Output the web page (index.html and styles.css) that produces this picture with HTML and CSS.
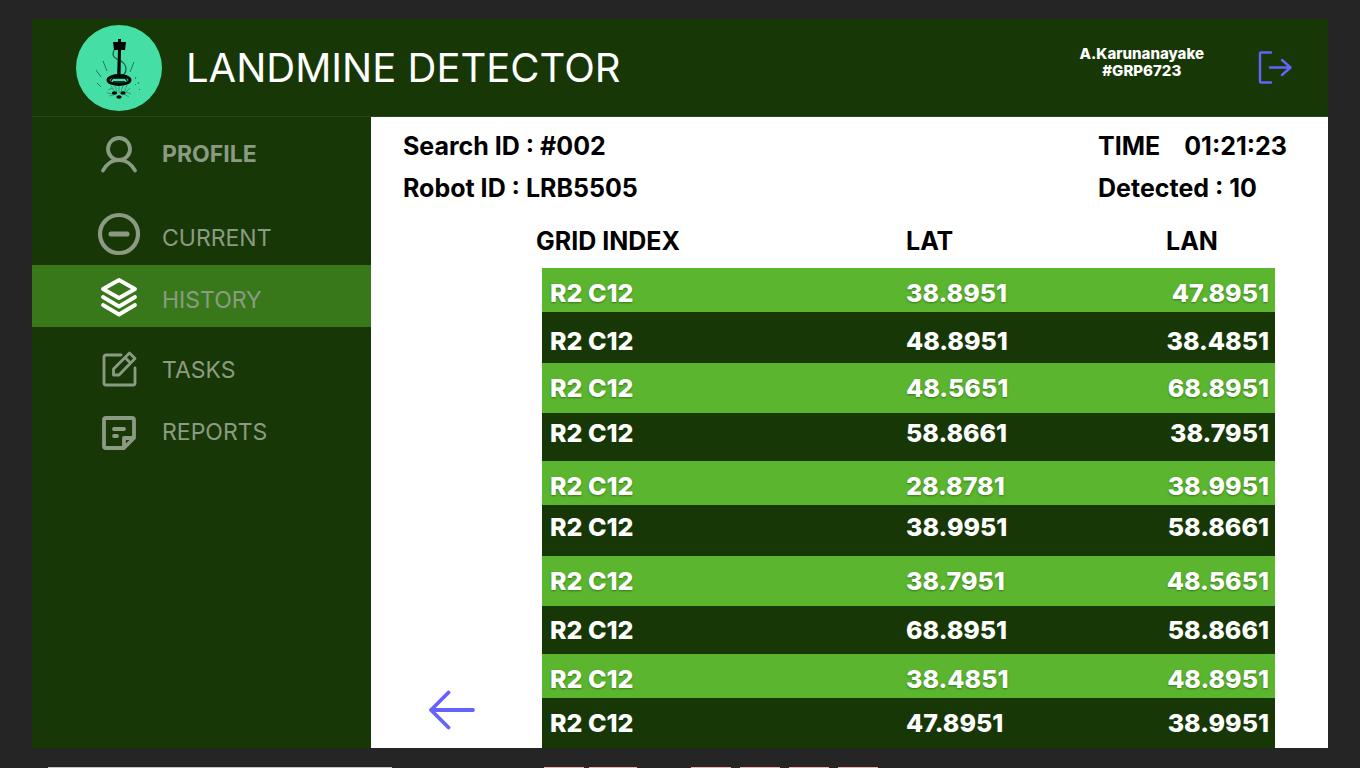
FILE: index.html
```html
<!DOCTYPE html>
<html lang="en">
<head>
<meta charset="utf-8">
<title>Landmine Detector</title>
<link rel="stylesheet" href="styles.css">
</head>
<body>
<div class="app">
  <header class="topbar">
    <svg class="logo" viewBox="0 0 86 86" aria-hidden="true">
      <circle cx="43" cy="43" r="43" fill="#45dfa6"/>
      <path d="M38 25c-2 5-1 7 3 9c5 2 9 5 9 10c0 4-2 6-5 7" fill="none" stroke="#176049" stroke-width="1.3"/>
      <g fill="none" stroke="#1c7b59" stroke-width="1">
        <path d="M27 36l4 10M58 37l-4 10M20 45l5 7M21 58l4 4"/>
        <path d="M60 52l-1 2M63 57l-1 2M59 59l1 1M64 64l-1 1"/>
        <path d="M32 65l5-2M31 68l6 1M33 71l5-1M35 61l4 6M39 61l2 6M43 61v7M47 61l-2 6M51 60l-3 8M54 63l-4 4M55 69l-5-2M53 72l-5-3" opacity=".6"/>
      </g>
      <path d="M42 14h3v3h5l-1 8h-4l-.5 28h-3.500L42 25h-4l-1-8h5z" fill="#040806"/>
      <ellipse cx="43" cy="55" rx="11" ry="4.500" fill="none" stroke="#040806" stroke-width="3"/>
      <path d="M35 56a8 4 0 0 1 16 0M37 57h12M39 53h9" fill="none" stroke="#040806" stroke-width="1.3"/>
      <g fill="#040806"><ellipse cx="38.500" cy="68" rx="2.700" ry="1.700"/><ellipse cx="47" cy="68" rx="2.700" ry="1.700"/><ellipse cx="43" cy="72" rx="2.700" ry="1.700"/></g>
    </svg>
    <h1 class="brand">LANDMINE DETECTOR</h1>
    <p class="user">A.Karunanayake<br>#GRP6723</p>
    <button class="icon-button" type="button" aria-label="Log out">
      <svg width="36" height="36" viewBox="0 0 36 36" fill="none" stroke="#6464fa" stroke-width="2.400" stroke-linecap="round" stroke-linejoin="round"><path d="M13 2.500H3a1 1 0 0 0-1 1v28a1 1 0 0 0 1 1h10M12 17.500h20M24 10l8.500 7.500L24 25"/></svg>
    </button>
  </header>
  <div class="body">
    <nav class="sidebar" aria-label="Main">
      <a class="item item-profile" href="#profile">
        <svg class="icon" viewBox="0 0 44 44" fill="none" stroke="currentColor" stroke-width="3.800" stroke-linecap="round"><circle cx="22" cy="17" r="11"/><path d="M6 38.500c3-6 9-10.500 16-10.500s13 4.500 16 10.500"/></svg>
        <span>PROFILE</span></a>
      <a class="item item-current" href="#current">
        <svg class="icon" viewBox="0 0 44 44" fill="none" stroke="currentColor" stroke-width="4.200" stroke-linecap="round"><circle cx="22" cy="22" r="19"/><path d="M14 22h16" stroke-width="5"/></svg>
        <span>CURRENT</span></a>
      <a class="item item-history" href="#history" aria-current="page">
        <svg class="icon" viewBox="0 0 44 44" fill="none" stroke="#fff" stroke-width="3.800" stroke-linecap="round" stroke-linejoin="round"><path d="M22 6L38 15L22 24L6 15zM6 23l16 9.500L38 23M6 31l16 9.500L38 31"/></svg>
        <span>HISTORY</span></a>
      <a class="item" href="#tasks">
        <svg class="icon" viewBox="0 0 44 44" fill="none" stroke="currentColor" stroke-width="2.800" stroke-linecap="round" stroke-linejoin="round"><path d="M24 7H9a2 2 0 0 0-2 2v26a2 2 0 0 0 2 2h27a2 2 0 0 0 2-2V20"/><path d="M16.500 27v-6L32.500 5L38 10.500L22 27zM28 9.500l5.500 5.500"/></svg>
        <span>TASKS</span></a>
      <a class="item" href="#reports">
        <svg class="icon" viewBox="0 0 44 44" fill="none" stroke="currentColor" stroke-width="3.800" stroke-linecap="round" stroke-linejoin="round"><path d="M27 38H9a2 2 0 0 1-2-2V10a2 2 0 0 1 2-2h26a2 2 0 0 1 2 2v18L27 38V28h9M17 19h10M17 26h3"/></svg>
        <span>REPORTS</span></a>
    </nav>
    <main class="content">
      <div class="summary">
        <div><p>Search ID : #002</p><p>Robot ID : LRB5505</p></div>
        <div><p class="time"><span>TIME</span><time>01:21:23</time></p><p>Detected : 10</p></div>
      </div>
      <div class="results">
        <button class="icon-button back" type="button" aria-label="Back">
          <svg width="48" height="40" viewBox="0 0 48 40" fill="none" stroke="#6464fa" stroke-width="3.800" stroke-linecap="round" stroke-linejoin="round"><path d="M45 20H3M20.500 2.500L3 20l17.500 17.500"/></svg>
        </button>
        <table class="grid">
          <thead><tr><th scope="col">GRID INDEX</th><th scope="col">LAT</th><th scope="col">LAN</th></tr></thead>
          <tbody>
            <tr class="short low"><td>R2 C12</td><td>38.8951</td><td>47.8951</td></tr>
            <tr class="tall low"><td>R2 C12</td><td>48.8951</td><td>38.4851</td></tr>
            <tr><td>R2 C12</td><td>48.5651</td><td>68.8951</td></tr>
            <tr class="medium high"><td>R2 C12</td><td>58.8661</td><td>38.7951</td></tr>
            <tr class="short low"><td>R2 C12</td><td>28.8781</td><td>38.9951</td></tr>
            <tr class="tall high"><td>R2 C12</td><td>38.9951</td><td>58.8661</td></tr>
            <tr><td>R2 C12</td><td>38.7951</td><td>48.5651</td></tr>
            <tr class="medium"><td>R2 C12</td><td>68.8951</td><td>58.8661</td></tr>
            <tr class="short low"><td>R2 C12</td><td>38.4851</td><td>48.8951</td></tr>
            <tr><td>R2 C12</td><td>47.8951</td><td>38.9951</td></tr>
          </tbody>
        </table>
      </div>
    </main>
  </div>
</div>
<div class="edge"></div>
</body>
</html>
```
FILE: styles.css
```css
* { box-sizing: border-box; }
body {
  margin: 0;
  min-height: 100vh;
  display: flex;
  flex-direction: column;
  background: #252525;
  font-family: Inter, "Liberation Sans", sans-serif;
}
h1, p { margin: 0; }
.app {
  flex: 1;
  padding: 19px 32px;
  display: flex;
  flex-direction: column;
}
.edge {
  height: 1px;
  background: linear-gradient(90deg,
    transparent 48px, #c9c5c3 48px 392px,
    transparent 392px 544px, #eeb0ae 544px 584px,
    transparent 584px 589px, #eeb0ae 589px 637px,
    transparent 637px 691px, #eeb0ae 691px 731px,
    transparent 731px 740px, #eeb0ae 740px 780px,
    transparent 780px 789px, #eeb0ae 789px 829px,
    transparent 829px 838px, #eeb0ae 838px 878px,
    transparent 878px);
}
.topbar {
  display: flex;
  align-items: center;
  height: 98px;
  padding: 0 34px 0 44px;
  background: #183706;
  border-bottom: 1px solid #244b18;
  color: #fff;
}
.logo { width: 86px; height: 86px; flex: none; }
.brand {
  flex: 1;
  margin-left: 24px;
  font-size: 40px;
  font-weight: 400;
}
.user {
  margin: 0 54px 12px 0;
  font-size: 15px;
  line-height: 17px;
  font-weight: 800;
  text-align: center;
}
.icon-button {
  display: block;
  padding: 0;
  border: 0;
  background: none;
  cursor: pointer;
}
.icon-button svg { display: block; }
.body { flex: 1; display: flex; }
.sidebar {
  flex: none;
  width: 339px;
  background: #183706;
}
.item {
  display: flex;
  align-items: center;
  gap: 21px;
  height: 62px;
  padding-left: 65px;
  color: #8b9b83;
  font-size: 23px;
  text-decoration: none;
}
.icon { width: 44px; height: 44px; flex: none; }
.item-profile { height: 74px; font-weight: 700; }
.item-current { height: 74px; padding-top: 12px; }
.item-current span, .item-history span { padding-top: 8px; }
.item-history { margin-bottom: 12px; background: #38781a; }
.content {
  flex: 1;
  display: flex;
  flex-direction: column;
  padding-left: 32px;
  background: #fff;
  color: #000;
}
.summary {
  display: flex;
  justify-content: space-between;
  padding: 8px 41px 0 0;
  font-size: 25px;
  line-height: 42px;
  font-weight: 700;
}
.time { display: flex; gap: 24px; }
.results { flex: 1; display: flex; align-items: flex-end; }
.back { margin: 0 60px 18px 25px; }
.grid {
  flex: 1;
  margin-right: 53px;
  border-collapse: separate;
  border-spacing: 0;
  table-layout: fixed;
  font-size: 25px;
  line-height: 30px;
  text-align: left;
}
.grid th { height: 56px; padding: 2px 0 0; font-weight: 700; }
.grid th:nth-child(2) { width: 260px; }
.grid th:nth-child(3) { width: 109px; }
.grid td { height: 50px; padding: 0; background: #183706; color: #fff; font-weight: 800; }
.grid td:first-child { border-left: 6px solid #fff; padding-left: 8px; }
.grid td:last-child { padding-right: 6px; text-align: right; }
.grid tr:nth-child(odd) td { background: #5bb52f; text-shadow: 0 1px 2px #38781a; }
.grid .short td { height: 44px; }
.grid .medium td { height: 48px; }
.grid .tall td { height: 51px; }
.grid .low td { padding-top: 6px; }
.grid .high td { padding-bottom: 8px; }
```
